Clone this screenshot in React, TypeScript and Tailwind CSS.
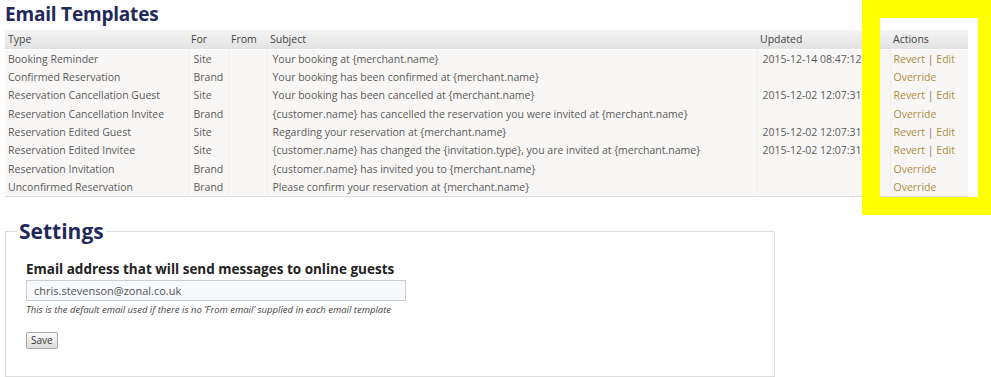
import React from "react"

const rows = [
  { type: "Booking Reminder", for: "Site", subject: "Your booking at {merchant.name}", updated: "2015-12-14 08:47:12", revert: true },
  { type: "Confirmed Reservation", for: "Brand", subject: "Your booking has been confirmed at {merchant.name}", updated: "", revert: false },
  { type: "Reservation Cancellation Guest", for: "Site", subject: "Your booking has been cancelled at {merchant.name}", updated: "2015-12-02 12:07:31", revert: true },
  { type: "Reservation Cancellation Invitee", for: "Brand", subject: "{customer.name} has cancelled the reservation you were invited at {merchant.name}", updated: "", revert: false },
  { type: "Reservation Edited Guest", for: "Site", subject: "Regarding your reservation at {merchant.name}", updated: "2015-12-02 12:07:31", revert: true },
  { type: "Reservation Edited Invitee", for: "Site", subject: "{customer.name} has changed the {invitation.type}, you are invited at {merchant.name}", updated: "2015-12-02 12:07:31", revert: true },
  { type: "Reservation Invitation", for: "Brand", subject: "{customer.name} has invited you to {merchant.name}", updated: "", revert: false },
  { type: "Unconfirmed Reservation", for: "Brand", subject: "Please confirm your reservation at {merchant.name}", updated: "", revert: false },
]

const font = { fontFamily: '"Open Sans", "DejaVu Sans", sans-serif' }

export default function App() {
  return (
    <div className="relative w-[991px] h-[377px] bg-white overflow-hidden px-[5px]" style={font}>
      <h1 className="pt-[2px] text-[19px] leading-[25px] font-bold text-[#1f2a5b] tracking-[-0.2px]">Email Templates</h1>

      <table className="table-fixed border-collapse w-[963px] mt-[3px] text-[10.5px] text-[#5a5a5a]">
        <colgroup>
          <col className="w-[183px]" />
          <col className="w-[40px]" />
          <col className="w-[39px]" />
          <col className="w-[490px]" />
          <col className="w-[133px]" />
          <col className="w-[78px]" />
        </colgroup>
        <thead>
          <tr className="h-[19px] bg-gradient-to-b from-[#f4f4f4] to-[#e2e2e2] border-b border-white">
            {["Type", "For", "From", "Subject", "Updated", "Actions"].map((h) => (
              <th key={h} className="text-left font-normal text-[#444] px-[3px] py-0 leading-[19px]">
                {h}
              </th>
            ))}
          </tr>
        </thead>
        <tbody className="bg-[#f8f7f5] border-b border-[#dcdcdc]">
          {rows.map((r) => (
            <tr key={r.type} className="h-[18.3px]">
              <td className="px-[3px] leading-[18px] whitespace-nowrap border-r border-[#eeeeee]">{r.type}</td>
              <td className="px-[5px] leading-[18px] border-r border-[#eeeeee]">{r.for}</td>
              <td className="px-[3px] leading-[18px] border-r border-[#eeeeee]"></td>
              <td className="px-[5px] leading-[18px] whitespace-nowrap border-r border-[#eeeeee]">{r.subject}</td>
              <td className="px-[5px] leading-[18px] whitespace-nowrap overflow-hidden border-r border-[#eeeeee]">{r.updated}</td>
              <td className="px-[3px] leading-[18px] whitespace-nowrap text-[#b08a3e]">
                {r.revert ? (
                  <>
                    <a href="#">Revert</a> <span className="text-[#777]">|</span> <a href="#">Edit</a>
                  </>
                ) : (
                  <a href="#">Override</a>
                )}
              </td>
            </tr>
          ))}
        </tbody>
      </table>

      <fieldset className="mt-[21px] w-[770px] h-[159px] border border-[#dcdcdc] px-[20px] pt-[15px]">
        <legend className="ml-[-9px] px-[2px] text-[21px] leading-[27px] font-bold text-[#1f2a5b]">Settings</legend>
        <label className="block text-[13.5px] font-bold text-[#222] leading-[18px]">
          Email address that will send messages to online guests
        </label>
        <input
          readOnly
          value="chris.stevenson@zonal.co.uk"
          className="mt-[2px] block w-[380px] h-[21px] border border-[#c9cdd6] bg-[#f6f8fb] px-[7px] text-[11px] text-[#555] outline-none"
          style={font}
        />
        <p className="mt-[3px] text-[9.5px] italic text-[#444] leading-[12px]">
          This is the default email used if there is no ‘From email’ supplied in each email template
        </p>
        <button
          className="mt-[16px] block h-[17px] px-[4px] border border-[#a9a9a9] rounded-[2px] bg-gradient-to-b from-[#fafafa] to-[#dcdcdc] text-[10px] leading-[15px] text-[#333]"
          style={font}
        >
          Save
        </button>
      </fieldset>

      <div className="absolute top-0 left-[862px] w-[129px] h-[215px] border-solid border-[#ffff00] border-l-[18px] border-t-[18px] border-b-[18px] border-r-[13px] pointer-events-none" />
    </div>
  )
}
